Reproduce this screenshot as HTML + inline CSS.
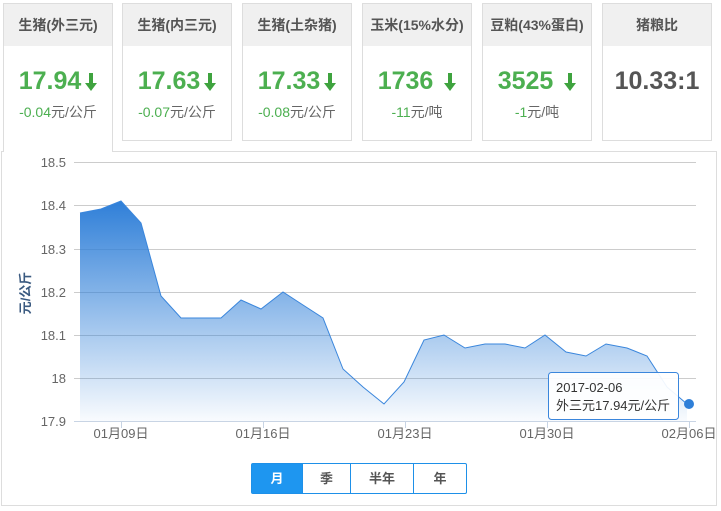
<!DOCTYPE html>
<html><head><meta charset="utf-8"><style>
*{margin:0;padding:0;box-sizing:border-box}
body{width:721px;height:511px;background:#fff;font-family:"Liberation Sans","Noto Sans CJK SC",sans-serif;position:relative;overflow:hidden}
.card{position:absolute;top:3px;width:110px;height:138px;border:1px solid #ddd;background:#fff;text-align:center}
.card .h{height:42px;background:#f0f0f0;line-height:42px;font-size:14px;font-weight:bold;color:#555}
.card .v{margin-top:20px;font-size:25px;font-weight:bold;color:#4caf50;height:30px;line-height:30px;white-space:nowrap}
.card .v.g{color:#555}
.card .d{margin-top:6px;font-size:14px;color:#666;white-space:nowrap}
.card .d span{color:#4caf50}
.ar{display:inline-block;vertical-align:middle;margin-left:4px}
.panel{position:absolute;left:1px;top:151px;width:716px;height:355px;border:1px solid #ddd}
#c1{height:149px;border-bottom:none;z-index:2}
.btns{position:absolute;left:251px;top:463px;height:31px;width:216px;border:1px solid #1e90e8;border-radius:2px;display:flex;font-size:13px;font-weight:bold;color:#555}
.btns div{text-align:center;line-height:29px;border-left:1px solid #1e90e8}
.btns div:first-child{border-left:none;background:#1e96f0;color:#fff}
</style></head><body>
<div class="card" id="c1" style="left:3px"><div class="h">生猪(外三元)</div><div class="v">17.94<svg class="ar" width="12" height="18" viewBox="0 0 12 18"><path d="M4 0h4v10h4l-6 8-6-8h4z" fill="#3fa33f"/></svg></div><div class="d"><span>-0.04</span>元/公斤</div></div>
<div class="card" style="left:122px"><div class="h">生猪(内三元)</div><div class="v">17.63<svg class="ar" width="12" height="18" viewBox="0 0 12 18"><path d="M4 0h4v10h4l-6 8-6-8h4z" fill="#3fa33f"/></svg></div><div class="d"><span>-0.07</span>元/公斤</div></div>
<div class="card" style="left:242px"><div class="h">生猪(土杂猪)</div><div class="v">17.33<svg class="ar" width="12" height="18" viewBox="0 0 12 18"><path d="M4 0h4v10h4l-6 8-6-8h4z" fill="#3fa33f"/></svg></div><div class="d"><span>-0.08</span>元/公斤</div></div>
<div class="card" style="left:362px"><div class="h">玉米(15%水分)</div><div class="v">1736 <svg class="ar" width="12" height="18" viewBox="0 0 12 18"><path d="M4 0h4v10h4l-6 8-6-8h4z" fill="#3fa33f"/></svg></div><div class="d"><span>-11</span>元/吨</div></div>
<div class="card" style="left:482px"><div class="h">豆粕(43%蛋白)</div><div class="v">3525 <svg class="ar" width="12" height="18" viewBox="0 0 12 18"><path d="M4 0h4v10h4l-6 8-6-8h4z" fill="#3fa33f"/></svg></div><div class="d"><span>-1</span>元/吨</div></div>
<div class="card" style="left:602px"><div class="h">猪粮比</div><div class="v g">10.33:1</div></div>
<div class="panel"></div>
<svg style="position:absolute;left:0;top:0" width="721" height="511">
<defs><linearGradient id="g" x1="0" y1="0" x2="0" y2="1"><stop offset="0" stop-color="#2f7fd8" stop-opacity="1"/><stop offset="1" stop-color="#2f7fd8" stop-opacity="0.03"/></linearGradient></defs>
<g stroke="#ccc" stroke-width="1">
<line x1="74" y1="162.5" x2="696" y2="162.5"/><line x1="74" y1="205.5" x2="696" y2="205.5"/><line x1="74" y1="249.5" x2="696" y2="249.5"/><line x1="74" y1="292.5" x2="696" y2="292.5"/><line x1="74" y1="335.5" x2="696" y2="335.5"/><line x1="74" y1="378.5" x2="696" y2="378.5"/><line x1="74" y1="421.5" x2="696" y2="421.5" stroke="#c8d4e4"/>
</g>
<g stroke="#c8d4e4"><line x1="121.5" y1="421" x2="121.5" y2="428"/><line x1="263.5" y1="421" x2="263.5" y2="428"/><line x1="405.5" y1="421" x2="405.5" y2="428"/><line x1="547.5" y1="421" x2="547.5" y2="428"/><line x1="689.5" y1="421" x2="689.5" y2="428"/></g>
<path d="M80,213 L101,209 L121,201 L141,223 L161,296 L181,318 L201,318 L221,318 L241,300 L261,309 L283,292 L303,305 L323,318 L343,369 L363,387 L384,404 L404,382 L424,340 L444,335 L465,348 L485,344 L505,344 L525,348 L545,335 L566,352 L586,356 L606,344 L627,348 L647,356 L667,387 L687,404 L687,421 L80,421Z" fill="url(#g)"/>
<path d="M80,213 L101,209 L121,201 L141,223 L161,296 L181,318 L201,318 L221,318 L241,300 L261,309 L283,292 L303,305 L323,318 L343,369 L363,387 L384,404 L404,382 L424,340 L444,335 L465,348 L485,344 L505,344 L525,348 L545,335 L566,352 L586,356 L606,344 L627,348 L647,356 L667,387 L687,404" fill="none" stroke="#3a86dc" stroke-width="1"/>
<circle cx="689" cy="404" r="5" fill="#2f7fd8"/>
<g font-family="Liberation Sans,Noto Sans CJK SC,sans-serif" font-size="13" fill="#666" text-anchor="end">
<text x="66" y="167">18.5</text><text x="66" y="210">18.4</text><text x="66" y="254">18.3</text><text x="66" y="297">18.2</text><text x="66" y="340">18.1</text><text x="66" y="383">18</text><text x="66" y="426">17.9</text>
</g>
<g font-family="Liberation Sans,Noto Sans CJK SC,sans-serif" font-size="13" fill="#666" text-anchor="middle">
<text x="121" y="438">01月09日</text><text x="263" y="438">01月16日</text><text x="405" y="438">01月23日</text><text x="547" y="438">01月30日</text><text x="689" y="438">02月06日</text>
</g>
<text transform="translate(30,293) rotate(-90)" text-anchor="middle" font-family="Liberation Sans,Noto Sans CJK SC,sans-serif" font-size="13" font-weight="bold" fill="#3a5a80">元/公斤</text>
<rect x="548.5" y="372.5" width="130" height="47" rx="3" fill="#fff" fill-opacity="0.92" stroke="#3a86dc"/>
<g font-family="Liberation Sans,Noto Sans CJK SC,sans-serif" font-size="13" fill="#333"><text x="556" y="392">2017-02-06</text><text x="556" y="410">外三元17.94元/公斤</text></g>
</svg>
<div class="btns"><div style="width:50px">月</div><div style="width:48px">季</div><div style="width:63px">半年</div><div style="width:53px">年</div></div>
</body></html>
